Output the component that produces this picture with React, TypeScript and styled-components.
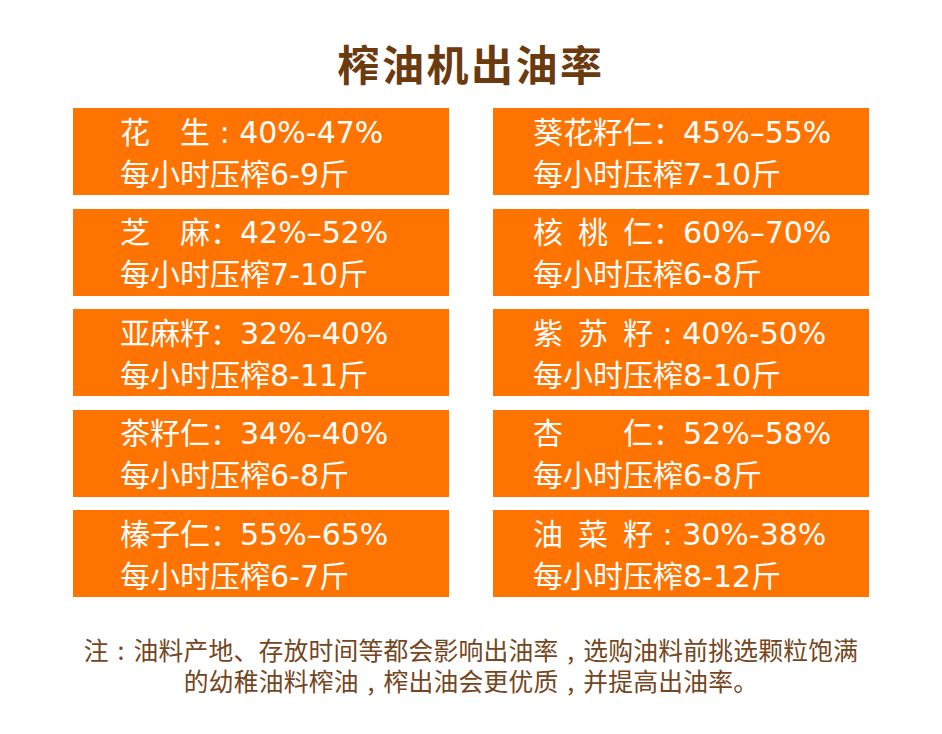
import { Fragment } from 'react'
import styled, { createGlobalStyle } from 'styled-components'

const GlobalStyle = createGlobalStyle`
  html, body {
    margin: 0;
    padding: 0;
    background: #ffffff;
  }
  body {
    font-family: "Noto Sans CJK SC", "Noto Sans", sans-serif;
  }
`

const Page = styled.div`
  width: 942px;
  height: 734px;
  display: flex;
  flex-direction: column;
  align-items: center;
  overflow: hidden;
`

const Title = styled.h1`
  margin: 38px 0 0;
  font-family: "Noto Sans CJK SC", sans-serif;
  font-size: 42px;
  font-weight: 700;
  line-height: 50px;
  letter-spacing: 2.5px;
  color: #6b3a0e;
`

const Grid = styled.div`
  margin-top: 20px;
  display: grid;
  grid-template-columns: 376px 376px;
  grid-auto-rows: 87px;
  column-gap: 44px;
  row-gap: 13.5px;
`

const RateBox = styled.div<{ $inset: number }>`
  background: #ff7300;
  display: flex;
  flex-direction: column;
  justify-content: center;
  padding: 4px 0 0 ${(p) => p.$inset}px;
  color: #ffffff;
  font-family: "DejaVu Sans", "Noto Sans CJK SC", sans-serif;
  font-size: 30px;
  line-height: 42px;
  white-space: pre;
`

const RateLine = styled.div``

const Note = styled.p`
  margin: 37px 0 0;
  font-family: "Noto Sans CJK SC", sans-serif;
  font-size: 24.8px;
  line-height: 31px;
  letter-spacing: 0.2px;
  color: #744621;
  text-align: center;
`

// centred half-width mark in a full-width cell, as in the reference
const Punct = styled.span`
  display: inline-block;
  width: 1em;
  line-height: 1;
  text-align: center;
`

type Seed = { name: string; hourly: string }

const left: Seed[] = [
  { name: '花　生 : 40%-47%', hourly: '每小时压榨6-9斤' },
  { name: '芝　麻：42%–52%', hourly: '每小时压榨7-10斤' },
  { name: '亚麻籽：32%–40%', hourly: '每小时压榨8-11斤' },
  { name: '茶籽仁：34%–40%', hourly: '每小时压榨6-8斤' },
  { name: '榛子仁：55%–65%', hourly: '每小时压榨6-7斤' },
]

const right: Seed[] = [
  { name: '葵花籽仁：45%–55%', hourly: '每小时压榨7-10斤' },
  { name: '核\u2002桃\u2002仁：60%–70%', hourly: '每小时压榨6-8斤' },
  { name: '紫\u2002苏\u2002籽 : 40%-50%', hourly: '每小时压榨8-10斤' },
  { name: '杏　　仁：52%–58%', hourly: '每小时压榨6-8斤' },
  { name: '油\u2002菜\u2002籽 : 30%-38%', hourly: '每小时压榨8-12斤' },
]

export default function App() {
  return (
    <Page>
      <GlobalStyle />
      <Title>榨油机出油率</Title>
      <Grid>
        {left.map((l, idx) => {
          const r = right[idx]
          return (
            <Fragment key={idx}>
              <RateBox $inset={47}>
                <RateLine>{l.name}</RateLine>
                <RateLine>{l.hourly}</RateLine>
              </RateBox>
              <RateBox $inset={40}>
                <RateLine>{r.name}</RateLine>
                <RateLine>{r.hourly}</RateLine>
              </RateBox>
            </Fragment>
          )
        })}
      </Grid>
      <Note>
        注<Punct>:</Punct>油料产地、存放时间等都会影响出油率<Punct>,</Punct>选购油料前挑选颗粒饱满
        <br />
        的幼稚油料榨油<Punct>,</Punct>榨出油会更优质<Punct>,</Punct>并提高出油率。
      </Note>
    </Page>
  )
}
